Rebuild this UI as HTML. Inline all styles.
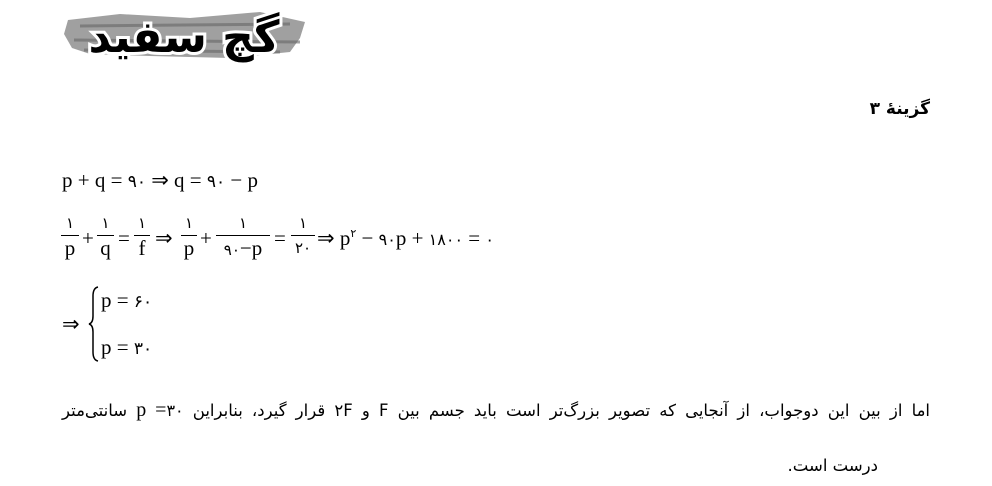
<!DOCTYPE html>
<html><head><meta charset="utf-8"><style>
body{margin:0;width:992px;height:486px;background:#fff;position:relative;overflow:hidden;font-family:"Liberation Serif","DejaVu Sans",serif;color:#000}
.a{position:absolute;white-space:nowrap}
.m{font-size:21px;font-family:"Liberation Serif","DejaVu Sans",serif}
.fa{font-family:"DejaVu Sans","Noto Sans CJK SC",sans-serif}
.fr{position:absolute;text-align:center}
.fr .n,.fr .d{display:block;font-size:21px;line-height:22px}
.fr .bar{display:block;border-top:1.5px solid #000;margin:1px 0}
</style></head><body>
<svg class="a" style="left:60px;top:8px" width="250" height="62">
<path d="M8 12 L60 6 L130 10 L200 4 L245 14 L240 30 L230 44 L170 50 L90 48 L30 46 L12 40 L4 26 Z" fill="#888" opacity="0.8"/>
<path d="M20 18 L230 16 M14 32 L240 34 M24 42 L220 44" stroke="#666" stroke-width="3" opacity="0.6"/>
<text x="124" y="44" text-anchor="middle" font-family="DejaVu Sans,sans-serif" font-weight="bold" font-size="44" fill="#000" stroke="#fff" stroke-width="6" paint-order="stroke" direction="rtl">گچ سفید</text>
</svg>
<div class="a fa" style="right:62px;top:99px;font-size:17px;font-weight:bold" dir="rtl">گزینهٔ ۳</div>
<div class="a m" style="left:62px;top:168px">p + q = <span class="fa" style="font-size:17px">۹۰</span> ⇒ q = <span class="fa" style="font-size:17px">۹۰</span> − p</div>
<div class="fr m" style="left:61px;top:212px;width:18px"><span class="n fa" style="font-size:15px">۱</span><span class="bar"></span><span class="n">p</span></div>
<div class="a m" style="left:82px;top:226px">+</div>
<div class="fr m" style="left:97px;top:212px;width:17px"><span class="n fa" style="font-size:15px">۱</span><span class="bar"></span><span class="n">q</span></div>
<div class="a m" style="left:118px;top:226px">=</div>
<div class="fr m" style="left:134px;top:212px;width:16px"><span class="n fa" style="font-size:15px">۱</span><span class="bar"></span><span class="n">f</span></div>
<div class="a m" style="left:155px;top:226px">⇒</div>
<div class="fr m" style="left:181px;top:212px;width:16px"><span class="n fa" style="font-size:15px">۱</span><span class="bar"></span><span class="n">p</span></div>
<div class="a m" style="left:200px;top:226px">+</div>
<div class="fr m" style="left:216px;top:212px;width:54px"><span class="n fa" style="font-size:15px">۱</span><span class="bar"></span><span class="n"><span class="fa" style="font-size:15px">۹۰</span>−p</span></div>
<div class="a m" style="left:274px;top:226px">=</div>
<div class="fr m" style="left:291px;top:212px;width:24px"><span class="n fa" style="font-size:15px">۱</span><span class="bar"></span><span class="n fa" style="font-size:15px">۲۰</span></div>
<div class="a m" style="left:317px;top:226px">⇒ p<sup class="fa" style="font-size:11px">۲</sup> − <span class="fa" style="font-size:16px">۹۰</span>p + <span class="fa" style="font-size:16px">۱۸۰۰</span> = <span class="fa" style="font-size:16px">۰</span></div>
<div class="a m" style="left:62px;top:312px">⇒</div>
<svg class="a" style="left:88px;top:286px" width="12" height="76"><path d="M10 1 Q5 2 5 10 L5 30 Q5 37 1 38 Q5 39 5 46 L5 66 Q5 74 10 75" fill="none" stroke="#000" stroke-width="1.5"/></svg>
<div class="a m" style="left:101px;top:288px">p = <span class="fa" style="font-size:17px">۶۰</span></div>
<div class="a m" style="left:101px;top:335px">p = <span class="fa" style="font-size:17px">۳۰</span></div>
<div class="a fa" style="left:62px;width:868px;top:399px;font-size:16.5px;text-align:justify;text-align-last:justify" dir="rtl">اما از بین این دوجواب، از آنجایی که تصویر بزرگ‌تر است باید جسم بین F و ۲F قرار گیرد، بنابراین <span dir="ltr" style="unicode-bidi:isolate;font-family:'Liberation Serif',serif;font-size:20px">p =<span class="fa" style="font-size:16px">۳۰</span></span> سانتی‌متر</div>
<div class="a fa" style="right:114px;top:456px;font-size:16.5px" dir="rtl">درست است.</div>
</body></html>
